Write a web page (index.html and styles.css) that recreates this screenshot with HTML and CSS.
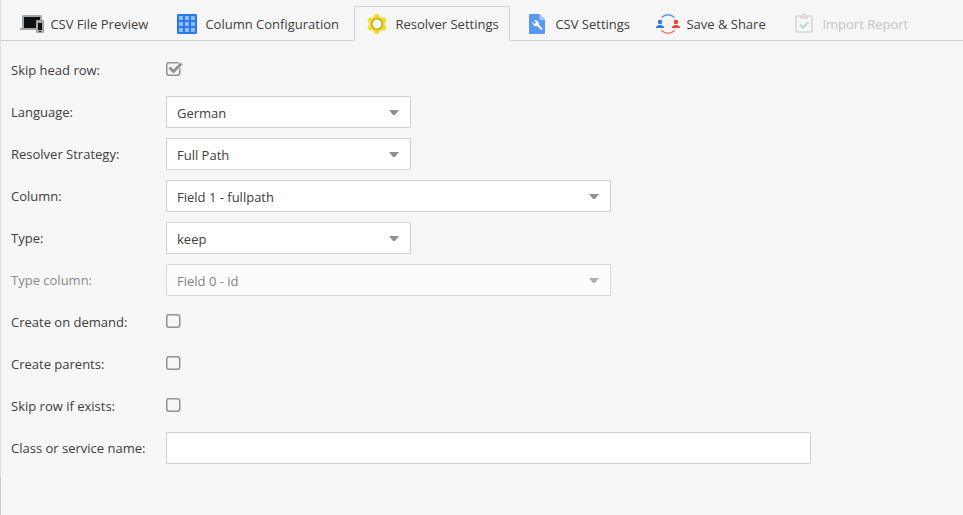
FILE: index.html
```html
<!DOCTYPE html>
<html lang="en">
<head>
<meta charset="utf-8">
<title>Resolver Settings</title>
<link rel="stylesheet" href="styles.css">
</head>
<body>
<main class="panel">
  <nav class="tabs">
    <div class="tab tab-preview">
      <svg class="icon" viewBox="0 0 24 24"><path fill="#a3a5a7" d="M3 3h18a1 1 0 0 1 1 1v14H0v-2h2V4a1 1 0 0 1 1-1z"/><path fill="#0c1116" d="M4 5h16v11H4z"/><rect x="16" y="8" width="8" height="13" rx="1" fill="#a3a5a7"/><path fill="#0c1116" d="M18 11h4v7h-4zM19 19h2v1h-2z"/></svg>
      <span>CSV File Preview</span>
    </div>
    <div class="tab tab-columns">
      <svg class="icon" viewBox="0 0 24 24"><rect x="2" y="2" width="20" height="20" rx="1.2" fill="#2878ee"/><path fill="#90bcf9" d="M4 4h4v4H4zM10 4h4v4h-4zM16 4h4v4h-4zM4 10h4v4H4zM10 10h4v4h-4zM16 10h4v4h-4zM4 16h4v4H4zM10 16h4v4h-4zM16 16h4v4h-4z"/></svg>
      <span>Column Configuration</span>
    </div>
    <div class="tab tab-active">
      <svg class="icon" viewBox="0 0 24 24"><g fill="#f0db2c"><circle cx="12" cy="12" r="8"/><path id="tooth" d="M10 2h4l.9 4v12l-.9 4h-4l-.9-4V6z"/><use href="#tooth" transform="rotate(60 12 12)"/><use href="#tooth" transform="rotate(120 12 12)"/></g><circle cx="12" cy="12" r="5.300" fill="#f6f6f6" stroke="#bda815" stroke-width="1.500"/></svg>
      <span>Resolver Settings</span>
    </div>
    <div class="tab tab-csv">
      <svg class="icon" viewBox="0 0 24 24"><path fill="#5798f3" d="M5 2h9.500L20 7.500V21a1 1 0 0 1-1 1H5a1 1 0 0 1-1-1V3a1 1 0 0 1 1-1z"/><path fill="#a7cafc" d="M14.500 2 20 7.500V8h-5a.5.5 0 0 1-.5-.5z"/><path fill="#fff" d="m7.300 9.800 2.200 2.200 1.600-1.600L9 8.400c1.300-.5 2.900-.2 3.900.8.900.9 1.200 2.200.8 3.400l3.500 3.600c.7.800-.7 2.200-1.500 1.400l-3.500-3.500c-1.300.4-2.600.1-3.500-.8-1-.9-1.300-2.300-1.400-3.500z"/></svg>
      <span>CSV Settings</span>
    </div>
    <div class="tab tab-share">
      <svg class="icon" viewBox="0 0 24 24"><path fill="none" stroke="#5998f4" stroke-width="1.300" d="M5.500 5.500c3.600-3.700 9.400-3.700 13 0"/><path fill="none" stroke="#f1665d" stroke-width="1.300" d="M5.500 18.500c3.600 3.700 9.400 3.700 13 0"/><g fill="#2878ee"><circle cx="4" cy="10" r="2.200"/><path d="M0 16c0-2.200 1.600-3 4-3s4 .8 4 3z"/></g><g fill="#ee4035"><circle cx="20" cy="10" r="2.200"/><path d="M16 16c0-2.200 1.600-3 4-3s4 .8 4 3z"/></g></svg>
      <span>Save &amp; Share</span>
    </div>
    <div class="tab tab-disabled">
      <svg class="icon" viewBox="0 0 24 24"><rect x="4" y="4" width="16" height="16" rx="1" fill="none" stroke="#dcdcdc" stroke-width="2"/><path fill="#dcdcdc" fill-rule="evenodd" d="M8 3h2a2 2 0 0 1 4 0h2v4H8zM11.300 3h1.400v1.300h-1.400z"/><path fill="none" stroke="#afdfc0" stroke-width="2" d="m8 12.500 3 3 5.300-5.300"/></svg>
      <span>Import Report</span>
    </div>
  </nav>

  <form class="form">
    <div class="row"><span class="label">Skip head row:</span>
      <svg class="check" viewBox="0 0 18 16"><rect x=".75" y="1.750" width="13" height="12.500" rx="2.200" fill="none" stroke="#919191" stroke-width="1.500"/><path fill="none" stroke="#f6f6f6" stroke-width="4.500" d="m3.500 6.500 4 4 8-8"/><path fill="none" stroke="#919191" stroke-width="3" d="m3.500 6.500 4 4 8-8"/></svg></div>
    <div class="row"><span class="label">Language:</span><div class="select"><span>German</span><i class="arrow"></i></div></div>
    <div class="row"><span class="label">Resolver Strategy:</span><div class="select"><span>Full Path</span><i class="arrow"></i></div></div>
    <div class="row"><span class="label">Column:</span><div class="select wide"><span>Field 1 - fullpath</span><i class="arrow"></i></div></div>
    <div class="row"><span class="label">Type:</span><div class="select"><span>keep</span><i class="arrow"></i></div></div>
    <div class="row disabled"><span class="label">Type column:</span><div class="select wide"><span>Field 0 - id</span><i class="arrow"></i></div></div>
    <div class="row"><span class="label">Create on demand:</span><svg class="check" viewBox="0 0 18 16"><rect class="outline" x=".75" y="1.750" width="13" height="12.500" rx="2.200"/></svg></div>
    <div class="row"><span class="label">Create parents:</span><svg class="check" viewBox="0 0 18 16"><rect class="outline" x=".75" y="1.750" width="13" height="12.500" rx="2.200"/></svg></div>
    <div class="row"><span class="label">Skip row if exists:</span><svg class="check" viewBox="0 0 18 16"><rect class="outline" x=".75" y="1.750" width="13" height="12.500" rx="2.200"/></svg></div>
    <div class="row"><span class="label">Class or service name:</span><input class="input" type="text" aria-label="Class or service name"></div>
  </form>
</main>
</body>
</html>
```

FILE: styles.css
```css
* { box-sizing: border-box; }
body {
  margin: 0;
  background: #f6f6f6;
  color: #404040;
  font: 13px/17px "Open Sans", "Noto Sans", sans-serif;
}
.panel {
  height: 515px;
  border-left: 1px solid;
  border-image: linear-gradient(#e0e0e0 476px, #cbcbcb 476px) 1;
  border-width: 0 0 0 1px;
}
.tabs {
  display: flex;
  align-items: flex-end;
  height: 41px;
  padding-left: 8px;
  box-shadow: inset 0 -1px #d0d0d0;
}
.tab {
  display: flex;
  align-items: center;
  gap: 6px;
  height: 35px;
  padding: 0 10px;
  border: 1px solid transparent;
  white-space: nowrap;
}
.tab span { padding: 2px 0 0 0.4px; }
.icon { flex: none; width: 24px; height: 24px; }
.tab-preview { width: 155px; }
.tab-columns { width: 190px; }
.tab-active {
  width: 156px;
  margin-right: 4px;
  background: #f6f6f6;
  border-color: #d0d0d0;
  border-bottom-color: #f6f6f6;
}
.tab-csv { width: 131px; }
.tab-share { width: 136px; }
.tab-disabled { color: #c4c4c4; }
.form {
  display: flex;
  flex-direction: column;
  gap: 10px;
  padding: 13px 10px 0;
}
.row { display: flex; align-items: center; height: 32px; }
.label { width: 155px; white-space: nowrap; }
.select {
  display: flex;
  align-items: center;
  justify-content: space-between;
  width: 245px;
  height: 32px;
  padding: 2px 11px 0 10px;
  background: #fff;
  border: 1px solid #d0d0d0;
}
.wide { width: 445px; }
.arrow {
  width: 10px;
  height: 5px;
  margin-top: -1px;
  background: #919191;
  clip-path: polygon(0 0, 100% 0, 60% 100%, 40% 100%);
}
.disabled .label { color: #8b8b8b; }
.disabled .select { background: #fcfcfc; border-color: #dadada; color: #838383; }
.disabled .arrow { background: #b0b0b0; }
.check { width: 18px; height: 16px; margin-top: -2px; }
.outline { fill: none; stroke: #919191; stroke-width: 1.5; }
.input {
  width: 645px;
  height: 32px;
  padding: 0 10px;
  background: #fff;
  border: 1px solid #d0d0d0;
  border-radius: 0;
  font: inherit;
}
```
